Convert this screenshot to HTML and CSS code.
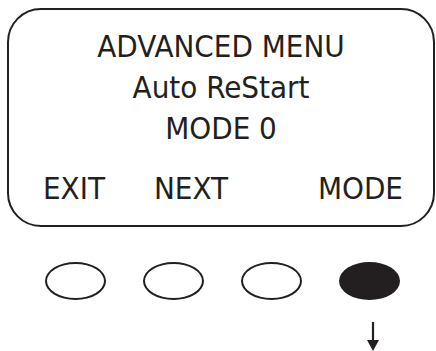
FILE: index.html
```html
<!DOCTYPE html>
<html lang="en">
<head>
    <meta charset="UTF-8">
    <meta name="viewport" content="width=device-width, initial-scale=1.0">
    <title>Advanced Menu</title>
    <link rel="stylesheet" href="styles.css">
</head>
<body>
    <div class="display">
        <p class="line">ADVANCED MENU</p>
        <p class="line">Auto ReStart</p>
        <p class="line">MODE 0</p>
        <div class="keys">
            <span class="key">EXIT</span>
            <span class="key key-next">NEXT</span>
            <span class="key key-mode">MODE</span>
        </div>
    </div>

    <div class="buttons">
        <span class="btn"></span>
        <span class="btn"></span>
        <span class="btn"></span>
        <span class="btn btn-on"></span>
    </div>

    <div class="pointer">
        <svg width="14" height="30" viewBox="0 0 14 30">
            <line x1="7" y1="0" x2="7" y2="22" stroke="#231f20" stroke-width="2.2"/>
            <polygon points="1,18 13,18 7,29" fill="#231f20"/>
        </svg>
    </div>
</body>
</html>
```

FILE: styles.css
```css
body {
    margin: 0;
    padding: 0;
    background: #fff;
    color: #231f20;
    font-family: "DejaVu Sans Condensed", "DejaVu Sans", sans-serif;
    font-stretch: condensed;
}

.display {
    box-sizing: border-box;
    width: 428px;
    height: 219px;
    margin: 8px 0 0 7px;
    padding-top: 16px;
    border: 2px solid #231f20;
    border-radius: 34px;
}

.line {
    margin: 0;
    font-size: 31px;
    line-height: 41px;
    text-align: center;
}

.keys {
    display: flex;
    margin-top: 19px;
    padding: 0 30px 0 34px;
    font-size: 31px;
    line-height: 41px;
}

.key-next {
    margin-left: 49px;
}

.key-mode {
    margin-left: auto;
}

.buttons {
    display: flex;
    gap: 37px;
    margin-top: 35px;
    padding-left: 45px;
}

.btn {
    box-sizing: border-box;
    width: 61px;
    height: 38px;
    border: 2px solid #231f20;
    border-radius: 50%;
}

.btn-on {
    background: #231f20;
}

.pointer {
    margin-top: 22px;
    padding-left: 366px;
    line-height: 0;
}
```
